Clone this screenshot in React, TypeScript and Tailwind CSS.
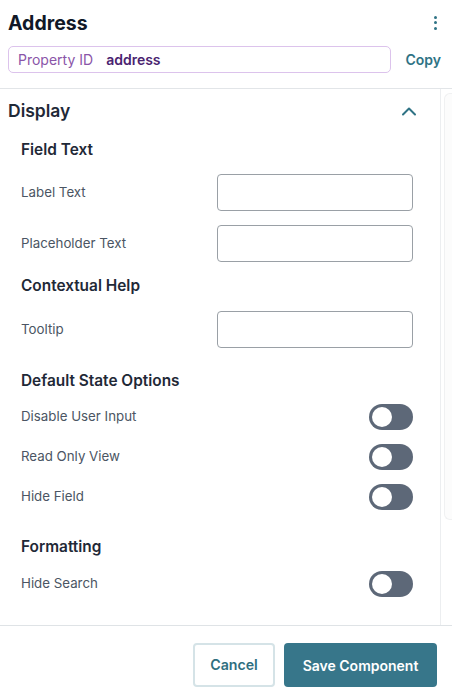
import React from "react";

function Toggle() {
  return (
    <div className="w-[44px] h-[26px] rounded-full bg-[#5d6878] flex items-center px-[3px]">
      <div className="w-[20px] h-[20px] rounded-full bg-white" />
    </div>
  );
}

function InputRow({ label }: { label: string }) {
  return (
    <div className="flex items-center justify-between">
      <span className="text-[13.3px] text-[#4b5563]">{label}</span>
      <div className="w-[196px] h-[37px] rounded-[4px] border border-[#9aa0a6] bg-white" />
    </div>
  );
}

function ToggleRow({ label }: { label: string }) {
  return (
    <div className="flex items-center justify-between h-[26px]">
      <span className="text-[13.3px] text-[#4b5563]">{label}</span>
      <Toggle />
    </div>
  );
}

export default function App() {
  return (
    <div
      className="w-[452px] h-[697px] bg-white flex flex-col overflow-hidden"
      style={{ fontFamily: "Inter, 'Noto Sans', sans-serif" }}
    >
      {/* Header */}
      <div className="flex items-center justify-between pl-[8px] pr-[14px] pt-[7px] h-[38px]">
        <h1 className="text-[19.5px] font-bold text-[#111827] leading-[26px]">Address</h1>
        <div className="flex flex-col items-center gap-[2.5px] w-[6px]">
          <span className="w-[3px] h-[3px] rounded-full bg-[#2f7385]" />
          <span className="w-[3px] h-[3px] rounded-full bg-[#2f7385]" />
          <span className="w-[3px] h-[3px] rounded-full bg-[#2f7385]" />
        </div>
      </div>
      <div className="flex items-center pl-[8px] pr-[11px] mt-[8px]">
        <div className="w-[383px] h-[27px] rounded-[5px] border border-[#dcc3ec] flex items-center pl-[9px] text-[14px]">
          <span className="text-[#8a55a8]">Property ID</span>
          <span className="ml-[13px] font-semibold text-[#4a2370]">address</span>
        </div>
        <span className="ml-auto text-[14px] font-semibold text-[#2f7385]">Copy</span>
      </div>
      <div className="mt-[15px] h-px bg-[#e2e5e8]" />

      {/* Content */}
      <div className="flex flex-1 min-h-0">
        <div className="flex-1 flex flex-col pl-[8px] pr-[27px]">
          <div className="flex items-center justify-between h-[28px] mt-[8px]">
            <h2 className="text-[17.5px] font-semibold text-[#1f2937]">Display</h2>
            <svg width="16" height="10" viewBox="0 0 16 10" className="-mr-[4px]">
              <path d="M2 8.5 L8 2.5 L14 8.5" fill="none" stroke="#2f7385" strokeWidth="2" strokeLinecap="round" strokeLinejoin="round" />
            </svg>
          </div>
          <div className="pl-[13px] flex flex-col">
            <h3 className="text-[15.4px] font-semibold text-[#1f2937] leading-[24px] mt-[13px]">Field Text</h3>
            <div className="mt-[12px] flex flex-col gap-[14px]">
              <InputRow label="Label Text" />
              <InputRow label="Placeholder Text" />
            </div>
            <h3 className="text-[15.4px] font-semibold text-[#1f2937] leading-[24px] mt-[12px]">Contextual Help</h3>
            <div className="mt-[13px]">
              <InputRow label="Tooltip" />
            </div>
            <h3 className="text-[15.4px] font-semibold text-[#1f2937] leading-[24px] mt-[21px]">Default State Options</h3>
            <div className="mt-[11px] flex flex-col gap-[14px]">
              <ToggleRow label="Disable User Input" />
              <ToggleRow label="Read Only View" />
              <ToggleRow label="Hide Field" />
            </div>
            <h3 className="text-[15.4px] font-semibold text-[#1f2937] leading-[24px] mt-[25px]">Formatting</h3>
            <div className="mt-[12px]">
              <ToggleRow label="Hide Search" />
            </div>
          </div>
        </div>
        <div className="w-[12px] border-l border-[#eceef0] pt-[4px] pl-[3px] pb-[105px]">
          <div className="h-full rounded-l-[6px] border border-r-0 border-[#f0f1f2] bg-[#fcfcfc]" />
        </div>
      </div>

      {/* Footer */}
      <div className="h-[72px] border-t border-[#dfe3e6] flex items-start justify-end gap-[9px] pr-[15px] pt-[17px]">
        <button className="w-[82px] h-[44px] rounded-[4px] border-2 border-[#d5e3e7] bg-white text-[14.2px] font-semibold text-[#2f6f80]">
          Cancel
        </button>
        <button className="w-[153px] h-[44px] rounded-[4px] bg-[#37768a] text-[14px] font-semibold text-white">
          Save Component
        </button>
      </div>
    </div>
  );
}
